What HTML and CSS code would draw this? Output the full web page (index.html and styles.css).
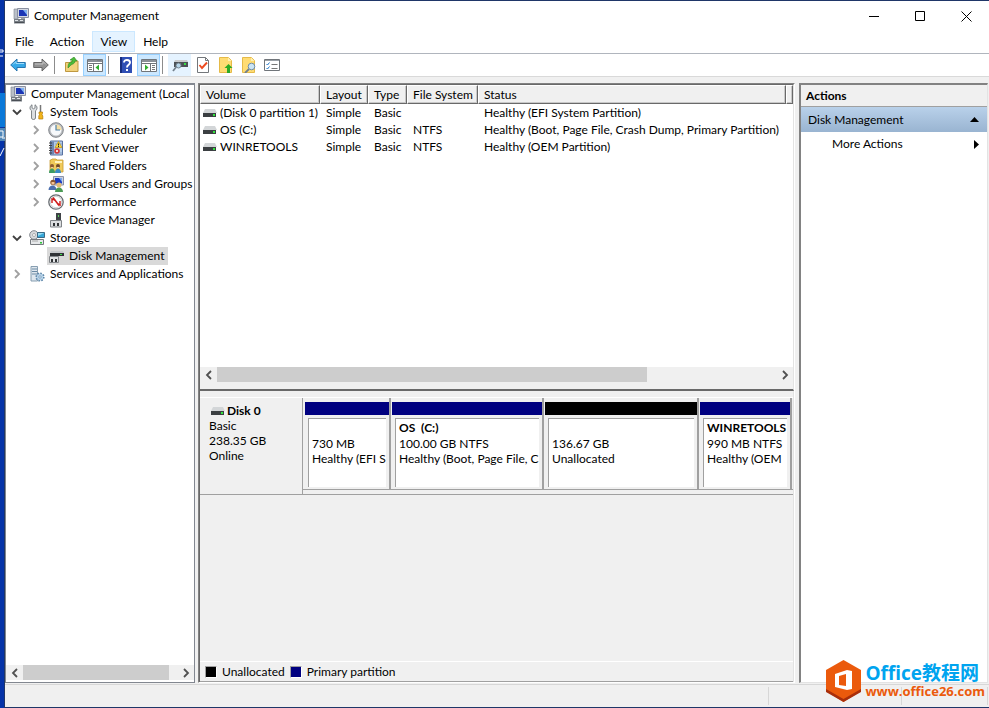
FILE: index.html
```html
<!DOCTYPE html>
<html lang="en">
<head>
  <meta charset="UTF-8" />
  <meta name="viewport" content="width=device-width, initial-scale=1.0"/>
  <title>Computer Management</title>
  <link rel="stylesheet" href="styles.css">
</head>
<body>
  <!-- shared icons -->
  <svg class="defs" aria-hidden="true">
    <symbol id="i-computer" viewBox="0 0 16 16">
      <path d="M1 1h4v10H1z" fill="#b9bfc8" stroke="#7d848f" stroke-width=".6"/>
      <path d="M4.500 .5h11v9h-11z" fill="#d5d9e2" stroke="#8a90a0"/>
      <path d="M6 2h8v6H6z" fill="#1b35b5"/>
      <path d="M10 2h4v5z" fill="#7fb0f0"/>
      <path d="M8 10h4v2H8z" fill="#9ea3aa"/>
      <path d="M1 11h11v4.500H1z" fill="#777d84"/>
      <path d="M2 12h3v1H2zM7 12h3v1H7z" fill="#dfe3e6"/>
      <path d="M2 14h9v1H2z" fill="#4a4f55"/>
    </symbol>
    <symbol id="i-tools" viewBox="0 0 16 16">
      <path d="M3 .8v3l1.500 1L6 3.800v-3c1.500.8 2 2 2 3.200 0 1.300-.8 2.200-1.500 2.800V14c0 2-4 2-4 0V6.800C1.800 6.200 1 5.300 1 4 1 2.800 1.500 1.600 3 .8z" fill="#dcdfe2" stroke="#73787d" stroke-width=".9"/>
      <path d="M11.500 1v7" stroke="#777" stroke-width="1.500"/>
      <path d="M10 8h3.500v1.500l-.5 1 .8 1.500v3h-4v-3l.7-1.500-.5-1z" fill="#f3b61c" stroke="#b57b08" stroke-width=".7"/>
    </symbol>
    <symbol id="i-clock" viewBox="0 0 16 16">
      <circle cx="8" cy="8" r="7.300" fill="#b9bcc0" stroke="#777b80" stroke-width=".9"/>
      <circle cx="8" cy="8" r="5.500" fill="#f7f9fb"/>
      <path d="M8 8V2.500A5.500 5.500 0 0 1 13.500 8z" fill="#f5dfa4"/>
      <path d="M8 3v5h4" fill="none" stroke="#4f82a8" stroke-width="1.200"/>
    </symbol>
    <symbol id="i-events" viewBox="0 0 16 16">
      <path d="M2.500 1h12v14h-12z" fill="#b4cbe8" stroke="#5871a0"/>
      <path d="M3 1.500h3v13H3z" fill="#6d86b3"/>
      <path d="M1 3h3M1 5.500h3M1 8h3M1 10.500h3M1 13h3" stroke="#444"/>
      <path d="M7 4h7M7 13h7" stroke="#8ba4c9"/>
      <path d="M10.500 1.500l3.500 6H7z" fill="#ffd83a" stroke="#b98b00" stroke-width=".6"/>
      <path d="M10.500 3.500v2M10.500 6v1" stroke="#222"/>
      <circle cx="9" cy="11" r="2.800" fill="#d63a3a"/>
      <path d="M8 10l2 2M10 10l-2 2" stroke="#fff" stroke-width=".8"/>
    </symbol>
    <symbol id="i-shared" viewBox="0 0 16 16">
      <path d="M2 4V2h1l1-1h4l1 1h6v12H2z" fill="#f0ca5a" stroke="#c69a30" stroke-width=".8"/>
      <path d="M7 3h7v2H7z" fill="#fff3bd"/>
      <circle cx="4" cy="8" r="2" fill="#8d5b31"/>
      <circle cx="10" cy="8" r="2" fill="#70482a"/>
      <path d="M1 15c0-6 6-6 6 0z" fill="#3d9b64"/>
      <path d="M7 15c0-6 6-6 6 0z" fill="#3b8dc4"/>
      <path d="M3 9h2v1H3zM9 9h2v1H9z" fill="#f6c99d"/>
    </symbol>
    <symbol id="i-users" viewBox="0 0 16 16">
      <path d="M5.500 .5h10v8.500h-10z" fill="#ccd2e0" stroke="#8b92a8"/>
      <path d="M7 2h7v5.500H7z" fill="#1b3bc0"/>
      <path d="M11 2h3v4z" fill="#7ca9ee"/>
      <circle cx="5" cy="6.500" r="2.700" fill="#8b552e"/>
      <path d="M3.500 6h3v2.500h-3z" fill="#f2c296"/>
      <circle cx="11" cy="9" r="2.500" fill="#e4bb76"/>
      <path d="M.5 14c0-6 8-6 8 0z" fill="#4c6fae"/>
      <path d="M7 16c0-6 8-6 8 0z" fill="#4b9a55"/>
    </symbol>
    <symbol id="i-perf" viewBox="0 0 16 16">
      <circle cx="8" cy="8" r="7.200" fill="#fff" stroke="#666b70" stroke-width="1.300"/>
      <circle cx="8" cy="8" r="5.700" fill="none" stroke="#b9bcc0" stroke-width=".7"/>
      <path d="M4 9V5l3 1M12 7v4l-2-1" fill="none" stroke="#d01c1c" stroke-width="1.400"/>
      <path d="M5 3.500l6 8" stroke="#d01c1c" stroke-width="1.600"/>
    </symbol>
    <symbol id="i-device" viewBox="0 0 16 16">
      <path d="M8 1h5v8H8z" fill="#3f4347"/>
      <path d="M10 3h1v2h-1z" fill="#59d35c"/>
      <path d="M2.500 8.500h11v6.500h-11z" fill="#dcdee0" stroke="#7f8387"/>
      <path d="M5 11h2v3H5zM9 11h2v3H9z" fill="#303336"/>
    </symbol>
    <symbol id="i-storage" viewBox="0 0 16 16">
      <circle cx="5" cy="5" r="4.300" fill="#d8dadd" stroke="#84888d"/>
      <circle cx="5" cy="5" r="1.500" fill="#fff" stroke="#888" stroke-width=".6"/>
      <path d="M8.500 2.500h7v5h-7z" fill="#36a7d8" stroke="#3c6b86"/>
      <path d="M9 3h6l-6 3z" fill="#9adcf3"/>
      <path d="M1.500 9.500h13v5h-13z" fill="#e6e8ea" stroke="#777b80"/>
      <path d="M11 12h2v1.500h-2z" fill="#2ec738"/>
      <path d="M3 11h6" stroke="#aaa"/>
    </symbol>
    <symbol id="i-diskmgmt" viewBox="0 0 16 16">
      <path d="M3 3h12l1 2H2z" fill="#c5c8cb"/>
      <path d="M2 5h14v3H2z" fill="#303337"/>
      <path d="M12 6h2v1h-2z" fill="#40e04a"/>
      <path d="M1.500 8.500h9v6h-9z" fill="#e1e3e5" stroke="#83878b"/>
      <path d="M3 11h2v3H3zM7 11h2v3H7z" fill="#303336"/>
    </symbol>
    <symbol id="i-services" viewBox="0 0 16 16">
      <path d="M2 .5h6.500v14.500H2z" fill="#dfe7ee" stroke="#7b94a8" stroke-width=".9"/>
      <path d="M3 3h5M3 5.500h5M3 8h5" stroke="#6c8ba5"/>
      <circle cx="11" cy="11" r="3.600" fill="#9fc0dc" stroke="#5d87a9" stroke-width="2" stroke-dasharray="1.500 1.300"/>
      <circle cx="11" cy="11" r="3" fill="#bcd7ec"/>
      <circle cx="11" cy="11" r="1.200" fill="#fff" stroke="#5d87a9" stroke-width=".7"/>
    </symbol>
    <symbol id="i-disk" viewBox="0 0 14 8">
      <path d="M2 0h10l2 4H0z" fill="#d3d6d8"/>
      <path d="M0 4h13v4H0z" fill="#3b3f42"/>
      <path d="M10 5h2v2h-2z" fill="#31e53c"/>
    </symbol>
    <symbol id="i-right" viewBox="0 0 8 10">
      <path d="M2 1l4 4-4 4" fill="none" stroke="currentColor" stroke-width="1.800"/>
    </symbol>
    <symbol id="i-down" viewBox="0 0 10 8">
      <path d="M1 2l4 4 4-4" fill="none" stroke="#404040" stroke-width="1.800"/>
    </symbol>
    <symbol id="i-left" viewBox="0 0 8 10">
      <path d="M6 1L2 5l4 4" fill="none" stroke="currentColor" stroke-width="1.800"/>
    </symbol>
  </svg>

  <!-- what is left of the desktop -->
  <svg class="desktop" viewBox="0 0 5 160" width="5" height="160" aria-hidden="true">
    <path d="M0 52h3v-2H0M0 56h3" fill="none" stroke="#fff"/>
    <path d="M0 93h5v34H0z" fill="#0a78d8"/>
    <path d="M0 128h5v13H0z" fill="#4f86b8"/>
    <path d="M0 131h3v6H0M2 138h3" fill="none" stroke="#fff"/>
    <path d="M0 156l4-8" stroke="#fff"/>
  </svg>

  <div class="window">
    <header class="titlebar">
      <svg class="icon"><use href="#i-computer"/></svg>
      <h1>Computer Management</h1>
      <button aria-label="Minimize"><svg width="11" height="11"><path d="M0 5.500h10" stroke="#000"/></svg></button>
      <button aria-label="Maximize"><svg width="11" height="11"><path d="M.5 .5h9v9h-9z" fill="none" stroke="#000"/></svg></button>
      <button aria-label="Close"><svg width="11" height="11"><path d="M.5 .5l10 10M10.500 .5l-10 10" stroke="#000"/></svg></button>
    </header>

    <nav class="menubar">
      <button>File</button>
      <button>Action</button>
      <button class="active">View</button>
      <button>Help</button>
    </nav>

    <div class="toolbar">
      <button aria-label="Back"><svg class="icon" viewBox="0 0 16 16"><path d="M.7 8L7 2v3.500h8.300v5H7V14z" fill="#36a9e8" stroke="#1c6ca8" stroke-width=".9"/><path d="M3 7.500L6 4.500v2h8" fill="none" stroke="#9fdcfa"/></svg></button>
      <button aria-label="Forward"><svg class="icon" viewBox="0 0 16 16"><path d="M15.300 8L9 2v3.500H.7v5H9V14z" fill="#929292" stroke="#5d5d5d" stroke-width=".9"/><path d="M2 7h8V4.500L13 7.500" fill="none" stroke="#c4c4c4"/></svg></button>
      <span class="sep"></span>
      <button aria-label="Up one level"><svg class="icon" viewBox="0 0 16 16"><path d="M1.500 14.500v-9h5l1-1.500h6.500v10.500z" fill="#f1d27c" stroke="#bf9840"/><path d="M4 11c0-4 1-6 4-6V3H6l4-3 3 4h-2c0 3-3 3-4 4z" fill="#4cbb3a" stroke="#2f8a24" stroke-width=".6"/></svg></button>
      <button class="on" aria-label="Show console tree"><svg class="icon" viewBox="0 0 16 16"><path d="M.5 2.500h15v12H.5z" fill="#fff" stroke="#70757a"/><path d="M1 3h14v2H1z" fill="#8a9097"/><path d="M6.500 6v8M1 6.500h14M10.500 3.500h1M12.500 3.500h1" stroke="#70757a"/><path d="M2 8.500h3M2 10.500h3M2 12.500h3" stroke="#777"/><path d="M12 7.500v6l-3.500-3z" fill="#2fae2f"/></svg></button>
      <span class="sep"></span>
      <button aria-label="Help"><svg class="icon" viewBox="0 0 16 16"><path d="M2 0h12v16H2z" fill="#2f4fb5"/><path d="M2 0h2v16H2z" fill="#172d7d"/><path d="M6 5.500c0-3.500 6-3.200 6 0C12 8 9 7.500 9 10.500" fill="none" stroke="#fff" stroke-width="1.900"/><path d="M8 12h2v2H8z" fill="#fff"/></svg></button>
      <button class="on" aria-label="Show action pane"><svg class="icon" viewBox="0 0 16 16"><path d="M.5 2.500h15v12H.5z" fill="#fff" stroke="#70757a"/><path d="M1 3h14v2H1z" fill="#8a9097"/><path d="M9.500 6v8M1 6.500h14" stroke="#70757a"/><path d="M11 8.500h3M11 10.500h3M11 12.500h3" stroke="#777"/><path d="M4 7.500v6l3.500-3z" fill="#2fae2f"/></svg></button>
      <span class="sep"></span>
      <button class="hover" aria-label="Disk settings"><svg class="icon" viewBox="0 0 16 16"><path d="M3 3h12l1 2H2z" fill="#c8cbce"/><path d="M2 5h14v5H2z" fill="#4b5055"/><path d="M12 6h2v2h-2z" fill="#39dd45"/><path d="M5 9l-4 5" stroke="#73808c" stroke-width="1.800"/><circle cx="6.500" cy="8.500" r="2.500" fill="#b5d5e9" stroke="#75838f"/></svg></button>
      <button aria-label="Check disk"><svg class="icon" viewBox="0 0 16 16"><path d="M2.500 .5h8l3 3v12h-11z" fill="#fff" stroke="#73777b"/><path d="M10.500 .5v3h3" fill="none" stroke="#73777b"/><path d="M4.500 8l2.500 3 5-5.500" fill="none" stroke="#ee4b20" stroke-width="1.900"/></svg></button>
      <button aria-label="Open folder"><svg class="icon" viewBox="0 0 16 16"><path d="M1.500 .5h9l3 3v12h-12z" fill="#ffdc73" stroke="#e5ba48"/><path d="M10 .5v3.500h3.500" fill="#fff0b4"/><path d="M10.500 7l4 4H12v5H9v-5H6.500z" fill="#2caa24"/></svg></button>
      <button aria-label="Search"><svg class="icon" viewBox="0 0 16 16"><path d="M1.500 .5h9l3 3v12h-12z" fill="#ffdc73" stroke="#e5ba48"/><path d="M10 .5v3.500h3.500" fill="#fff0b4"/><path d="M8 12l-4 4" stroke="#71808d" stroke-width="1.800"/><circle cx="10.500" cy="9.500" r="3.300" fill="#cbe5f5" stroke="#718da5"/></svg></button>
      <button aria-label="Properties"><svg class="icon" viewBox="0 0 16 16"><path d="M.5 2.500h15v11H.5z" fill="#fff" stroke="#70757a"/><path d="M1 3h14v1H1z" fill="#9ba1a7"/><path d="M2.500 7l1 1 2-2.500M2.500 11l1 1 2-2.500" fill="none" stroke="#2178ca"/><path d="M7.500 7.500h6M7.500 11.500h6" stroke="#777"/></svg></button>
    </div>

    <main class="panes">
      <aside class="tree">
        <div class="tree-list">
          <a href="#" class="node root"><svg class="icon"><use href="#i-computer"/></svg>Computer Management (Local</a>
          <ul>
            <li>
              <div class="row"><button class="twisty" aria-label="Collapse"><svg width="10" height="8"><use href="#i-down"/></svg></button><a href="#" class="node"><svg class="icon"><use href="#i-tools"/></svg>System Tools</a></div>
              <ul>
                <li class="row"><button class="twisty" aria-label="Expand"><svg width="8" height="10"><use href="#i-right"/></svg></button><a href="#" class="node"><svg class="icon"><use href="#i-clock"/></svg>Task Scheduler</a></li>
                <li class="row"><button class="twisty" aria-label="Expand"><svg width="8" height="10"><use href="#i-right"/></svg></button><a href="#" class="node"><svg class="icon"><use href="#i-events"/></svg>Event Viewer</a></li>
                <li class="row"><button class="twisty" aria-label="Expand"><svg width="8" height="10"><use href="#i-right"/></svg></button><a href="#" class="node"><svg class="icon"><use href="#i-shared"/></svg>Shared Folders</a></li>
                <li class="row"><button class="twisty" aria-label="Expand"><svg width="8" height="10"><use href="#i-right"/></svg></button><a href="#" class="node"><svg class="icon"><use href="#i-users"/></svg>Local Users and Groups</a></li>
                <li class="row"><button class="twisty" aria-label="Expand"><svg width="8" height="10"><use href="#i-right"/></svg></button><a href="#" class="node"><svg class="icon"><use href="#i-perf"/></svg>Performance</a></li>
                <li class="row"><span class="twisty"></span><a href="#" class="node"><svg class="icon"><use href="#i-device"/></svg>Device Manager</a></li>
              </ul>
            </li>
            <li>
              <div class="row"><button class="twisty" aria-label="Collapse"><svg width="10" height="8"><use href="#i-down"/></svg></button><a href="#" class="node"><svg class="icon"><use href="#i-storage"/></svg>Storage</a></div>
              <ul>
                <li class="row"><span class="twisty"></span><a href="#" class="node selected"><svg class="icon"><use href="#i-diskmgmt"/></svg>Disk Management</a></li>
              </ul>
            </li>
            <li class="row"><button class="twisty" aria-label="Expand"><svg width="8" height="10"><use href="#i-right"/></svg></button><a href="#" class="node"><svg class="icon"><use href="#i-services"/></svg>Services and Applications</a></li>
          </ul>
        </div>
        <div class="scrollbar">
          <button aria-label="Scroll left"><svg width="8" height="10"><use href="#i-left"/></svg></button>
          <div class="track"><div class="thumb tree-thumb"></div></div>
          <button aria-label="Scroll right"><svg width="8" height="10"><use href="#i-right"/></svg></button>
        </div>
      </aside>

      <section class="content">
        <div class="volumes">
          <div class="volume-list">
            <table>
              <colgroup>
                <col class="c-volume"><col class="c-layout"><col class="c-type"><col class="c-fs"><col><col class="c-rest">
              </colgroup>
              <thead>
                <tr><th>Volume</th><th>Layout</th><th>Type</th><th>File System</th><th>Status</th><th></th></tr>
              </thead>
              <tbody>
                <tr><td><svg class="disk"><use href="#i-disk"/></svg>(Disk 0 partition 1)</td><td>Simple</td><td>Basic</td><td></td><td>Healthy (EFI System Partition)</td><td></td></tr>
                <tr><td><svg class="disk"><use href="#i-disk"/></svg>OS (C:)</td><td>Simple</td><td>Basic</td><td>NTFS</td><td>Healthy (Boot, Page File, Crash Dump, Primary Partition)</td><td></td></tr>
                <tr><td><svg class="disk"><use href="#i-disk"/></svg>WINRETOOLS</td><td>Simple</td><td>Basic</td><td>NTFS</td><td>Healthy (OEM Partition)</td><td></td></tr>
              </tbody>
            </table>
          </div>
          <div class="scrollbar">
            <button aria-label="Scroll left"><svg width="8" height="10"><use href="#i-left"/></svg></button>
            <div class="track"><div class="thumb list-thumb"></div></div>
            <button aria-label="Scroll right"><svg width="8" height="10"><use href="#i-right"/></svg></button>
          </div>
        </div>

        <div class="graph">
          <div class="disk-row">
            <div class="disk-info">
              <h2><svg class="disk"><use href="#i-disk"/></svg>Disk 0</h2>
              <p>Basic</p>
              <p>238.35 GB</p>
              <p>Online</p>
            </div>
            <div class="partitions">
              <div class="part efi">
                <div class="bar"></div>
                <div class="box"><h3></h3><p>730 MB</p><p>Healthy (EFI S</p></div>
              </div>
              <div class="part os">
                <div class="bar"></div>
                <div class="box"><h3>OS &nbsp;(C:)</h3><p>100.00 GB NTFS</p><p>Healthy (Boot, Page File, C</p></div>
              </div>
              <div class="part free">
                <div class="bar"></div>
                <div class="box"><h3></h3><p>136.67 GB</p><p>Unallocated</p></div>
              </div>
              <div class="part oem">
                <div class="bar"></div>
                <div class="box"><h3>WINRETOOLS</h3><p>990 MB NTFS</p><p>Healthy (OEM</p></div>
              </div>
            </div>
          </div>
          <div class="legend">
            <span class="swatch black"></span>Unallocated
            <span class="swatch navy"></span>Primary partition
          </div>
        </div>
      </section>

      <aside class="actions">
        <h2>Actions</h2>
        <button class="group">Disk Management<svg width="9" height="5"><path d="M0 5l4.500-5L9 5z"/></svg></button>
        <button class="more">More Actions<svg width="5" height="9"><path d="M0 0l5 4.500L0 9z"/></svg></button>
      </aside>
    </main>

    <footer class="statusbar">
      <span class="s-main"></span><span class="s-mid"></span><span class="s-end"></span>
    </footer>
  </div>

  <a href="#" class="watermark">
    <svg width="37" height="44" viewBox="0 0 37 44">
      <path d="M18.500 1L36 11v21L18.500 43 1 32V11z" fill="#eb5a0c"/>
      <path d="M1 30l17.500 10L36 30v3L18.500 43 1 33z" fill="#a92f0b"/>
      <path fill-rule="evenodd" d="M10 15l12-4 5 1v18l-5 1-12-3zM14 17v9l7 1V15z" fill="#fff"/>
    </svg>
    <span class="brand"><b>Office教程网</b><i>www.office26.com</i></span>
  </a>
</body>
</html>
```

FILE: styles.css
```css
* {
  box-sizing: border-box;
}
body {
  margin: 0;
  padding: 1px 0 1px 5px;
  height: 100vh;
  overflow: hidden;
  font-family: "Segoe UI", Lato, "Open Sans", sans-serif;
  font-size: 12px;
  line-height: 18px;
  color: #000;
  background: linear-gradient(90deg, #0533a8 4px, #1f3668 4px);
}
h1, h2, h3, p, ul {
  margin: 0;
  padding: 0;
  font-size: 12px;
}
ul {
  list-style: none;
}
button {
  padding: 0;
  border: 0;
  background: none;
  font: inherit;
  color: inherit;
}
a {
  color: inherit;
  text-decoration: none;
}
svg {
  display: block;
  flex: none;
}
.defs {
  display: none;
}
.desktop {
  position: absolute;
  left: 0;
  top: 0;
}
.icon {
  width: 16px;
  height: 16px;
}
.window {
  display: flex;
  flex-direction: column;
  height: 100%;
  background: #f0f0f0;
}

/* title, menu and tool bars */
.titlebar {
  display: flex;
  align-items: center;
  height: 30px;
  padding-left: 8px;
  background: #fff;
}
.titlebar h1 {
  flex: 1;
  margin-left: 5px;
  font-weight: normal;
}
.titlebar button {
  display: flex;
  align-items: center;
  justify-content: center;
  width: 46px;
  height: 28px;
}
.menubar {
  display: flex;
  height: 23px;
  padding: 0 0 1px 2px;
  background: #fff;
  border-bottom: 1px solid #b0b5bd;
}
.menubar button {
  padding: 0 7px;
  border: 1px solid transparent;
}
.menubar .active {
  background: #e5f3ff;
  border-color: #cce8ff;
}
.toolbar {
  display: flex;
  align-items: center;
  height: 23px;
  padding-left: 1px;
  background: #fff;
  border-bottom: 1px solid #d9d9d9;
}
.toolbar button {
  display: flex;
  align-items: center;
  justify-content: center;
  width: 23px;
  height: 22px;
  border: 1px solid transparent;
}
.toolbar .on {
  background: #cce8ff;
  border-color: #99d1ff;
}
.toolbar .hover {
  background: #e5f3ff;
}
.sep {
  width: 1px;
  height: 18px;
  margin: 0 5px 0 2px;
  background: #8c8c8c;
}

/* three panes */
.panes {
  flex: 1;
  display: flex;
  gap: 3px;
  min-height: 0;
  padding: 6px 1px 1px 0;
}
.tree {
  display: flex;
  flex-direction: column;
  width: 190px;
  background: #fff;
  border: 1px solid #828790;
  border-top-width: 2px;
}
.tree-list {
  flex: 1;
  overflow: hidden;
  white-space: nowrap;
}
.tree-list > ul {
  padding-left: 3px;
}
.tree-list ul ul {
  padding-left: 19px;
}
.row {
  display: flex;
  height: 18px;
}
.node {
  display: flex;
  align-items: center;
  gap: 5px;
  height: 18px;
  padding: 0 4px 0 1px;
}
.root {
  padding-left: 4px;
}
.selected {
  background: #d9d9d9;
}
.twisty {
  display: flex;
  flex: none;
  align-items: center;
  justify-content: center;
  width: 16px;
  margin-right: 3px;
  color: #a0a0a0;
}
.scrollbar {
  display: flex;
  height: 15px;
  margin-bottom: 2px;
  background: #f0f0f0;
  color: #505050;
}
.scrollbar button {
  display: flex;
  align-items: center;
  justify-content: center;
  width: 17px;
}
.track {
  flex: 1;
}
.thumb {
  height: 100%;
  background: #cdcdcd;
}
.tree-thumb {
  width: 95%;
}
.list-thumb {
  width: 77%;
}

/* volume list */
.content {
  flex: 1;
  display: flex;
  flex-direction: column;
  min-width: 0;
  margin-right: 1px;
  border: 1px solid #828282;
  border-right-color: #fff;
  border-bottom-color: #fff;
}
.volumes {
  flex: 309 1 0;
  display: flex;
  flex-direction: column;
  min-height: 0;
  border: 1px solid #696969;
  border-right-color: #e3e3e3;
  border-bottom: 2px solid #696969;
}
.volume-list {
  flex: 1;
  overflow: hidden;
  background: #fff;
}
table {
  width: 100%;
  table-layout: fixed;
  border-collapse: separate;
  border-spacing: 0;
}
.c-volume { width: 120px; }
.c-layout { width: 48px; }
.c-type { width: 39px; }
.c-fs { width: 71px; }
.c-rest { width: 7px; }
th, td {
  padding: 0 0 0 6px;
  text-align: left;
  font-weight: normal;
  white-space: nowrap;
  line-height: 17px;
}
th {
  height: 19px;
  background: #f0f0f0;
  border-top: 1px solid #fff;
  border-left: 1px solid #fff;
  border-right: 1px solid #696969;
  border-bottom: 1px solid #696969;
  box-shadow: inset -1px -1px #c8c8c8;
  padding-left: 5px;
}
td:first-child {
  padding-left: 3px;
}
.disk {
  display: inline-block;
  width: 14px;
  height: 8px;
  margin-right: 3px;
}
.volumes .scrollbar {
  margin-bottom: 7px;
  box-shadow: 0 7px #f0f0f0;
}

/* graphical view */
.graph {
  flex: 289 1 0;
  display: flex;
  flex-direction: column;
  min-height: 0;
  padding-top: 6px;
  border-left: 1px solid #696969;
  border-right: 1px solid #e3e3e3;
}
.disk-row {
  display: flex;
  height: 98px;
  border-top: 1px solid #fff;
  border-bottom: 1px solid #a0a0a0;
}
.disk-info {
  width: 103px;
  padding: 5px 0 0 9px;
  border-right: 1px solid #a0a0a0;
  line-height: 15px;
}
.disk-info h2 {
  padding-left: 2px;
}
.disk-info .disk {
  margin-right: 2px;
}
.partitions {
  flex: 1;
  display: flex;
  min-width: 0;
  height: 92px;
  padding: 0 1px 0 1px;
  border-bottom: 1px solid #a0a0a0;
}
.part {
  display: flex;
  flex-direction: column;
  min-width: 0;
  padding: 4px 0 2px 1px;
  border-right: 2px solid #a0a0a0;
}
.efi { flex: 84 1 0; }
.os { flex: 150 1 0; }
.free { flex: 152 1 0; }
.oem { flex: 90 1 0; }
.bar {
  height: 13px;
  background: #000080;
}
.free .bar {
  background: #000;
}
.box {
  flex: 1;
  margin: 3px 3px 0;
  padding: 0 3px;
  overflow: hidden;
  background: #fff;
  border-top: 1px solid #a0a0a0;
  border-left: 1px solid #a0a0a0;
  line-height: 15px;
  white-space: nowrap;
}
.box h3 {
  height: 17px;
  line-height: 18px;
}
.legend {
  display: flex;
  align-items: center;
  gap: 5px;
  height: 21px;
  margin-top: auto;
  padding-left: 5px;
  border-top: 1px solid #fff;
  border-bottom: 1px solid #a0a0a0;
}
.swatch {
  width: 12px;
  height: 12px;
  border: 1px solid #a0a0a0;
  border-right-color: #fff;
  border-bottom-color: #fff;
}
.black { background: #000; }
.navy { background: #000080; }

/* actions */
.actions {
  width: 189px;
  background: #fff;
  border: 1px solid #828282;
  border-width: 2px 1px 1px 2px;
  border-right-color: #e3e3e3;
  border-bottom-color: #e3e3e3;
}
.actions h2 {
  height: 22px;
  padding-left: 5px;
  line-height: 21px;
  background: #f0f0f0;
  border-bottom: 1px solid #a0a0a0;
}
.actions button {
  display: flex;
  align-items: center;
  justify-content: space-between;
  width: 100%;
  height: 25px;
  padding: 0 8px 0 7px;
}
.actions .group {
  background: linear-gradient(#b9d1ea, #99b4d1);
}
.actions .more {
  height: 24px;
  padding-left: 31px;
}
.statusbar {
  display: flex;
  height: 23px;
  padding: 2px 1px;
  border-top: 1px solid #d7d7d7;
}
.statusbar span {
  border-right: 1px solid #d7d7d7;
}
.s-main { flex: 1; }
.s-mid { width: 133px; }
.s-end { width: 86px; }

/* site mark over the corner */
.watermark {
  position: absolute;
  right: 4px;
  bottom: 5px;
  display: flex;
  align-items: center;
  gap: 3px;
}
.brand b, .brand i {
  display: block;
  font-style: normal;
  font-weight: bold;
}
.brand b {
  font-family: "Open Sans", "Noto Sans CJK SC", sans-serif;
  font-size: 19px;
  line-height: 20px;
  color: #00a4ef;
}
.brand i {
  font-family: "Open Sans", sans-serif;
  font-size: 13px;
  line-height: 16px;
  color: #eb5a0c;
}
```
